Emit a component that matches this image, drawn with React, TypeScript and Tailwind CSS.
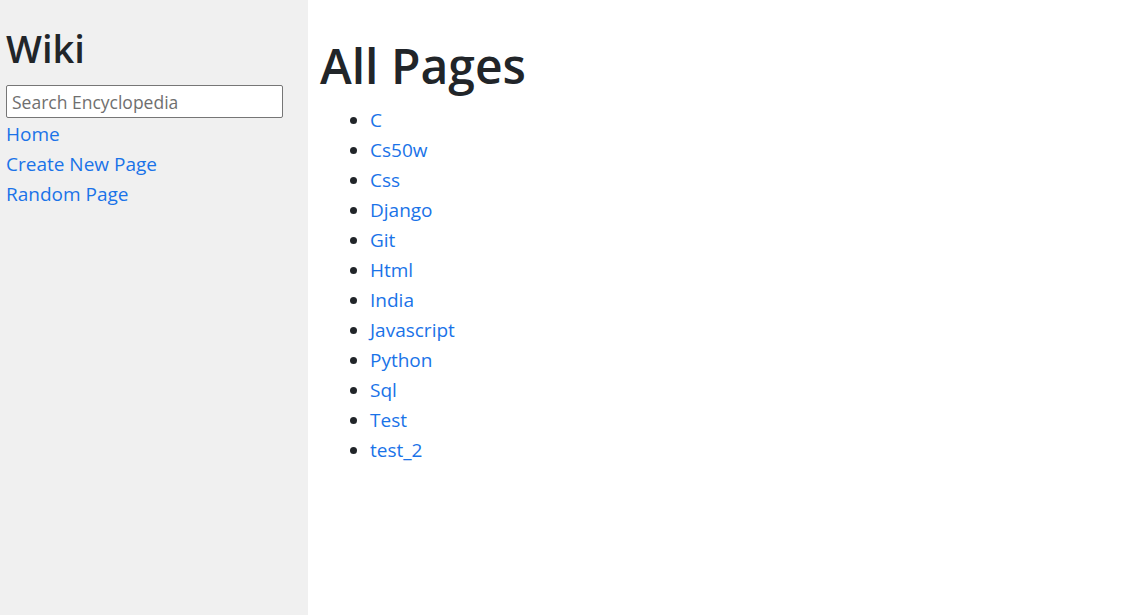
import React from "react";

const pages = [
  "C",
  "Cs50w",
  "Css",
  "Django",
  "Git",
  "Html",
  "India",
  "Javascript",
  "Python",
  "Sql",
  "Test",
  "test_2",
];

const font = { fontFamily: '"Open Sans", "Noto Sans", sans-serif' };

export default function App() {
  return (
    <div
      className="flex h-[615px] w-full bg-white text-[19px] leading-[30px] text-[#212529]"
      style={font}
    >
      {/* Sidebar */}
      <div className="w-[308px] shrink-0 bg-[#f0f0f0] px-[6px] pt-[26px]">
        <h2 className="mb-[15px] text-[38px] font-semibold leading-[44px]">Wiki</h2>
        <input
          type="text"
          placeholder="Search Encyclopedia"
          className="block h-[33px] w-[277px] rounded-[2px] border border-[#767676] bg-white px-[5px] text-[17.5px] placeholder:text-[#6f6f6f]"
        />
        <div className="mt-[1px] flex flex-col">
          <a href="#" className="text-[#1a73e8]">
            Home
          </a>
          <a href="#" className="text-[#1a73e8]">
            Create New Page
          </a>
          <a href="#" className="text-[#1a73e8]">
            Random Page
          </a>
        </div>
      </div>

      {/* Main */}
      <div className="flex-1 px-[12px] pt-[37px]">
        <h1 className="mb-[10px] text-[48px] font-semibold leading-[58px]">All Pages</h1>
        <ul className="list-disc pl-[50px]">
          {pages.map((p) => (
            <li key={p}>
              <a href="#" className="text-[#1a73e8]">
                {p}
              </a>
            </li>
          ))}
        </ul>
      </div>
    </div>
  );
}
